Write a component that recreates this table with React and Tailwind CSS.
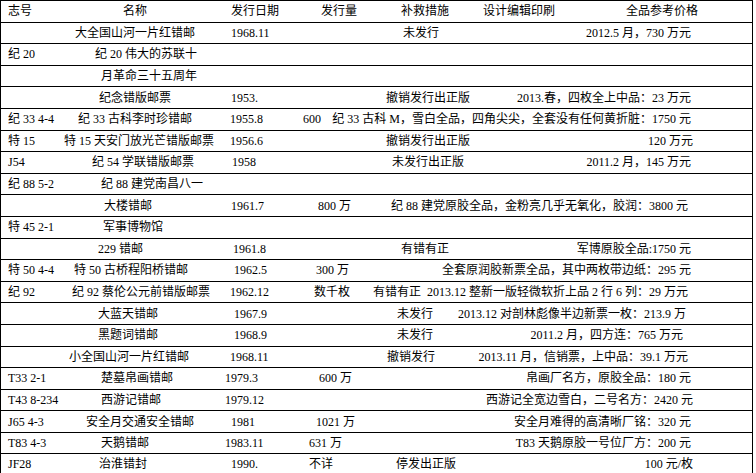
import React from 'react';

const rows = [
  { code: '志号', name: '名称', np: 'pl-[62px]', date: '发行日期', dp: 'pl-[8px]', qty: '发行量', qp: 'pl-[20px]', rem: '补救措施', rp: 'pl-[28px]', mid: '设计编辑印刷', price: '全品参考价格', pp: 'pr-[54px]' },
  { name: '大全国山河一片红错邮', np: 'pl-[14px]', date: '1968.11', dp: 'pl-[8px]', rem: '未发行', rp: 'pl-[30px]', price: '2012.5 月，730 万元', pp: 'pr-[61px]' },
  { code: '纪 20', name: '纪 20 伟大的苏联十', np: 'pl-[34px]' },
  { name: '月革命三十五周年', np: 'pl-[40px]' },
  { name: '纪念错版邮票', np: 'pl-[38px]', date: '1953.', dp: 'pl-[8px]', rem: '撤销发行出正版', rp: 'pl-[13px]', price: '2013.春，四枚全上中品：23 万元', pp: 'pr-[61px]' },
  { code: '纪 33 4-4', name: '纪 33 古科李时珍错邮', np: 'pl-[17px]', date: '1955.8', dp: 'pl-[7px]', span: true, qty: '600', qp: 'pl-[2px]', price: '纪 33 古科 M，雪白全品，四角尖尖，全套没有任何黄折脏：1750 元', pp: 'pr-[61px]' },
  { code: '特 15', name: '特 15 天安门放光芒错版邮票', np: 'pl-[3px]', date: '1956.6', dp: 'pl-[7px]', rem: '撤销发行出正版', rp: 'pl-[13px]', price: '120 万元', pp: 'pr-[59px]' },
  { code: 'J54', name: '纪 54 学联错版邮票', np: 'pl-[31px]', date: '1958', dp: 'pl-[9px]', rem: '未发行出正版', rp: 'pl-[19px]', price: '2011.2 月，145 万元', pp: 'pr-[61px]' },
  { code: '纪 88 5-2', name: '纪 88 建党南昌八一', np: 'pl-[40px]' },
  { name: '大楼错邮', np: 'pl-[43px]', date: '1961.7', dp: 'pl-[8px]', qty: '800 万', qp: 'pl-[17px]', price: '纪 88 建党原胶全品，金粉亮几乎无氧化，胶润：3800 元', pp: 'pr-[64px]' },
  { code: '特 45 2-1', name: '军事博物馆', np: 'pl-[42px]' },
  { name: '229 错邮', np: 'pl-[37px]', date: '1961.8', dp: 'pl-[10px]', rem: '有错有正', rp: 'pl-[28px]', price: '军博原胶全品:1750 元', pp: 'pr-[61px]' },
  { code: '特 50 4-4', name: '特 50 古桥程阳桥错邮', np: 'pl-[13px]', date: '1962.5', dp: 'pl-[11px]', qty: '300 万', qp: 'pl-[15px]', price: '全套原润胶新票全品，其中两枚带边纸：295 元', pp: 'pr-[61px]' },
  { code: '纪 92', name: '纪 92 蔡伦公元前错版邮票', np: 'pl-[11px]', date: '1962.12', dp: 'pl-[7px]', qty: '数千枚', qp: 'pl-[13px]', rem: '有错有正', rp: 'pl-0', price: '2013.12 整新一版轻微软折上品 2 行 6 列：29 万元', pp: 'pr-[64px]' },
  { name: '大蓝天错邮', np: 'pl-[37px]', date: '1967.9', dp: 'pl-[11px]', rem: '未发行', rp: 'pl-[24px]', price: '2013.12 对剖林彪像半边新票一枚：213.9 万', pp: 'pr-[66px]' },
  { name: '黑题词错邮', np: 'pl-[37px]', date: '1968.9', dp: 'pl-[11px]', rem: '未发行', rp: 'pl-[24px]', price: '2011.2 月，四方连：765 万元', pp: 'pr-[69px]' },
  { name: '小全国山河一片红错邮', np: 'pl-[8px]', date: '1968.11', dp: 'pl-[7px]', rem: '撤销发行', rp: 'pl-[14px]', price: '2013.11 月，信销票，上中品：39.1 万元', pp: 'pr-[64px]' },
  { code: 'T33 2-1', name: '楚墓帛画错邮', np: 'pl-[40px]', date: '1979.3', dp: 'pl-[2px]', qty: '600 万', qp: 'pl-[18px]', price: '帛画厂名方，原胶全品：180 元', pp: 'pr-[61px]' },
  { code: 'T43 8-234', name: '西游记错邮', np: 'pl-[40px]', date: '1979.12', dp: 'pl-[2px]', price: '西游记全宽边雪白，二号名方：2420 元', pp: 'pr-[59px]' },
  { code: 'J65 4-3', name: '安全月交通安全错邮', np: 'pl-[25px]', date: '1981', dp: 'pl-[8px]', qty: '1021 万', qp: 'pl-[15px]', price: '安全月难得的高清晰厂铭：320 元', pp: 'pr-[61px]' },
  { code: 'T83 4-3', name: '天鹅错邮', np: 'pl-[40px]', date: '1983.11', dp: 'pl-[2px]', qty: '631 万', qp: 'pl-[8px]', price: 'T83 天鹅原胶一号位厂方：200 元', pp: 'pr-[61px]' },
  { code: 'JF28', name: '治淮错封', np: 'pl-[38px]', date: '1990.', dp: 'pl-[8px]', qty: '不详', qp: 'pl-[8px]', rem: '停发出正版', rp: 'pl-[23px]', price: '100 元/枚', pp: 'pr-[59px]' },
];

function Row({ r, last }) {
  return (
    <div className={`flex items-center whitespace-nowrap ${last ? 'h-[20px]' : 'h-[21.6px] border-b border-black'}`}>
      <div className="w-[60px] shrink-0 pl-[7px]">{r.code}</div>
      <div className={`w-[162px] shrink-0 ${r.np || ''}`}>{r.name}</div>
      <div className={`w-[78px] shrink-0 ${r.dp || ''}`}>{r.date}</div>
      {r.span ? (
        <div className={`flex flex-1 ${r.qp} ${r.pp}`}>
          <span>{r.qty}</span>
          <span className="ml-auto">{r.price}</span>
        </div>
      ) : (
        <>
          <div className={`w-[72px] shrink-0 ${r.qp || ''}`}>{r.qty}</div>
          <div className={`flex flex-1 ${r.pp || ''}`}>
            {r.rem && <span className={r.rp}>{r.rem}</span>}
            {r.mid && <span className="ml-[34px]">{r.mid}</span>}
            {r.price && <span className="ml-auto">{r.price}</span>}
          </div>
        </>
      )}
    </div>
  );
}

export default function App() {
  return (
    <div className="h-[473px] w-[756px] overflow-hidden bg-white text-[12px] leading-none text-black font-['Liberation_Serif','Noto_Sans_CJK_SC',serif]">
      <div className="w-[753px] border-x border-t border-black">
        {rows.map((r, i) => (
          <Row key={i} r={r} last={i === rows.length - 1} />
        ))}
      </div>
    </div>
  );
}
